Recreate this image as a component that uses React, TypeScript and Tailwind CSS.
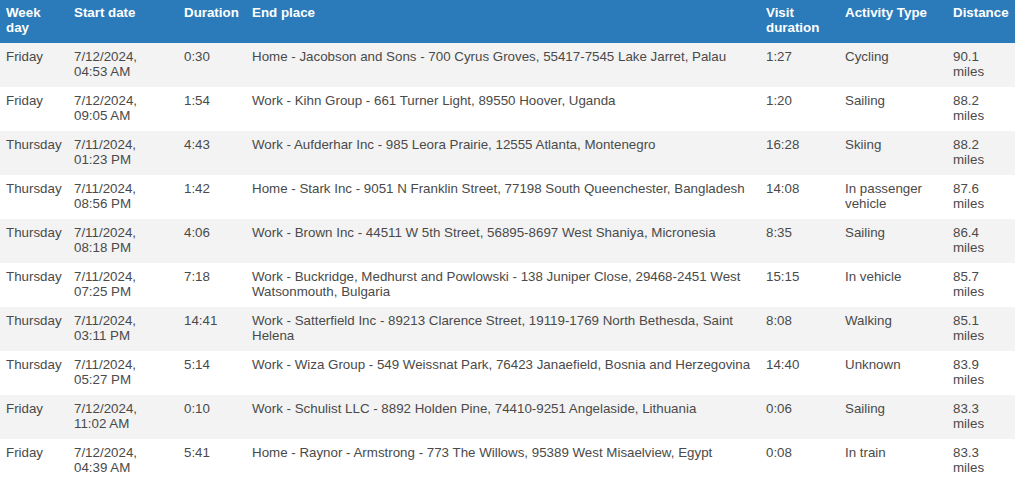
import React from "react";

type Row = {
  day: string;
  date: string[];
  dur: string;
  place: string[];
  visit: string;
  act: string[];
  dist: string[];
};

const rows: Row[] = [
  { day: "Friday", date: ["7/12/2024,", "04:53 AM"], dur: "0:30", place: ["Home - Jacobson and Sons - 700 Cyrus Groves, 55417-7545 Lake Jarret, Palau"], visit: "1:27", act: ["Cycling"], dist: ["90.1", "miles"] },
  { day: "Friday", date: ["7/12/2024,", "09:05 AM"], dur: "1:54", place: ["Work - Kihn Group - 661 Turner Light, 89550 Hoover, Uganda"], visit: "1:20", act: ["Sailing"], dist: ["88.2", "miles"] },
  { day: "Thursday", date: ["7/11/2024,", "01:23 PM"], dur: "4:43", place: ["Work - Aufderhar Inc - 985 Leora Prairie, 12555 Atlanta, Montenegro"], visit: "16:28", act: ["Skiing"], dist: ["88.2", "miles"] },
  { day: "Thursday", date: ["7/11/2024,", "08:56 PM"], dur: "1:42", place: ["Home - Stark Inc - 9051 N Franklin Street, 77198 South Queenchester, Bangladesh"], visit: "14:08", act: ["In passenger", "vehicle"], dist: ["87.6", "miles"] },
  { day: "Thursday", date: ["7/11/2024,", "08:18 PM"], dur: "4:06", place: ["Work - Brown Inc - 44511 W 5th Street, 56895-8697 West Shaniya, Micronesia"], visit: "8:35", act: ["Sailing"], dist: ["86.4", "miles"] },
  { day: "Thursday", date: ["7/11/2024,", "07:25 PM"], dur: "7:18", place: ["Work - Buckridge, Medhurst and Powlowski - 138 Juniper Close, 29468-2451 West", "Watsonmouth, Bulgaria"], visit: "15:15", act: ["In vehicle"], dist: ["85.7", "miles"] },
  { day: "Thursday", date: ["7/11/2024,", "03:11 PM"], dur: "14:41", place: ["Work - Satterfield Inc - 89213 Clarence Street, 19119-1769 North Bethesda, Saint", "Helena"], visit: "8:08", act: ["Walking"], dist: ["85.1", "miles"] },
  { day: "Thursday", date: ["7/11/2024,", "05:27 PM"], dur: "5:14", place: ["Work - Wiza Group - 549 Weissnat Park, 76423 Janaefield, Bosnia and Herzegovina"], visit: "14:40", act: ["Unknown"], dist: ["83.9", "miles"] },
  { day: "Friday", date: ["7/12/2024,", "11:02 AM"], dur: "0:10", place: ["Work - Schulist LLC - 8892 Holden Pine, 74410-9251 Angelaside, Lithuania"], visit: "0:06", act: ["Sailing"], dist: ["83.3", "miles"] },
  { day: "Friday", date: ["7/12/2024,", "04:39 AM"], dur: "5:41", place: ["Home - Raynor - Armstrong - 773 The Willows, 95389 West Misaelview, Egypt"], visit: "0:08", act: ["In train"], dist: ["83.3", "miles"] },
];

const Lines = ({ lines }: { lines: string[] }) => (
  <>
    {lines.map((l, i) => (
      <div key={i} className="whitespace-nowrap">
        {l}
      </div>
    ))}
  </>
);

const cols = "grid grid-cols-[68px_110px_68px_514px_79px_108px_68px]";

export default function App() {
  return (
    <div
      className="w-[1015px] h-[481px] overflow-hidden bg-white text-[13.33px] leading-[15px] text-[#4a4a4a]"
      style={{ fontFamily: '"Liberation Sans", Arial, sans-serif' }}
    >
      <div className={`${cols} bg-[#2b7bba] text-white font-bold h-[43px]`}>
        {[["Week", "day"], ["Start date"], ["Duration"], ["End place"], ["Visit", "duration"], ["Activity Type"], ["Distance"]].map((h, i) => (
          <div key={i} className="pl-[6px] pt-[5px]">
            <Lines lines={h} />
          </div>
        ))}
      </div>
      {rows.map((r, i) => (
        <div key={i} className={`${cols} h-[44px] ${i % 2 === 0 ? "bg-[#f3f3f3]" : "bg-white"}`}>
          <div className="pl-[6px] pt-[6px]"><Lines lines={[r.day]} /></div>
          <div className="pl-[6px] pt-[6px]"><Lines lines={r.date} /></div>
          <div className="pl-[6px] pt-[6px]"><Lines lines={[r.dur]} /></div>
          <div className="pl-[6px] pt-[6px]"><Lines lines={r.place} /></div>
          <div className="pl-[6px] pt-[6px]"><Lines lines={[r.visit]} /></div>
          <div className="pl-[6px] pt-[6px]"><Lines lines={r.act} /></div>
          <div className="pl-[6px] pt-[6px]"><Lines lines={r.dist} /></div>
        </div>
      ))}
    </div>
  );
}
